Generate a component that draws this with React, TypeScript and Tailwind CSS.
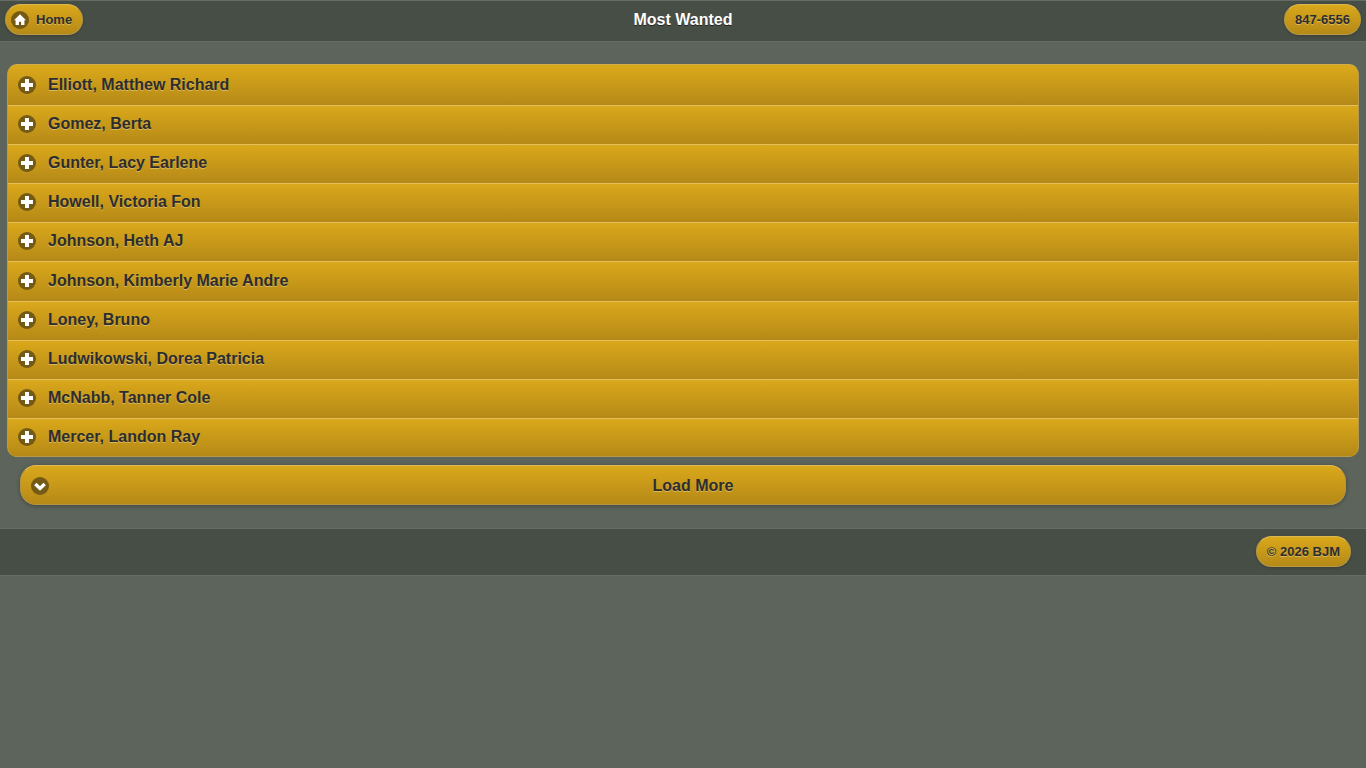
import type { ReactNode } from "react";

const people = [
    "Elliott, Matthew Richard",
    "Gomez, Berta",
    "Gunter, Lacy Earlene",
    "Howell, Victoria Fon",
    "Johnson, Heth AJ",
    "Johnson, Kimberly Marie Andre",
    "Loney, Bruno",
    "Ludwikowski, Dorea Patricia",
    "McNabb, Tanner Cole",
    "Mercer, Landon Ray",
];

const gold = "bg-linear-to-b from-[#daa81b] to-[#b58917] text-[#2d2d30] [text-shadow:0_1px_0_#d9b95c]";
const pill = "flex h-[31px] items-center rounded-full border border-[#b89a45] border-t-[#dcb850] text-[13px] leading-4 font-bold shadow-[0_1px_3px_rgba(0,0,0,0.2)]";

const IconDisc = ({ children }: { children: ReactNode }) => (
    <svg viewBox="0 0 18 18" className="h-[18px] w-[18px] shrink-0" aria-hidden="true">
        <circle cx="9" cy="9" r="9" fill="#745a14" />
        {children}
    </svg>
);

const PlusIcon = () => (
    <IconDisc>
        <path d="M7 3h4v4h4v4h-4v4H7v-4H3V7h4z" fill="#fff" />
    </IconDisc>
);

const HomeIcon = () => (
    <IconDisc>
        <path d="M9 3.2 3 9.3h1.6V14h3.3v-3.2h2.2V14h3.3V9.3H15L9 3.2Z" fill="#fff" />
    </IconDisc>
);

const ArrowDownIcon = () => (
    <IconDisc>
        <path d="m4.3 7 4.7 4.4L13.7 7" fill="none" stroke="#fff" strokeWidth="3.4" />
    </IconDisc>
);

const App = () => {
    return (
        <div className="min-h-screen bg-[#5c645b] font-['Liberation_Sans',sans-serif] text-base">
            <header className="grid h-[42px] grid-cols-[1fr_auto_1fr] items-start border-y border-[#656c64] bg-[#474e46] px-[5px] pt-[3px]">
                <a href="#home" className={`${pill} ${gold} justify-self-start gap-[7px] pr-[10px] pl-[5px]`}>
                    <HomeIcon />
                    Home
                </a>
                <h1 className="leading-[31px] font-bold text-white [text-shadow:0_1px_0_#222]">Most Wanted</h1>
                <a href="tel:847-6556" className={`${pill} ${gold} justify-self-end px-[10px]`}>847-6556</a>
            </header>

            <main className="px-[7px] pt-[22px] pb-[23px]">
                <ul className="flex min-h-[393px] flex-col overflow-hidden rounded-[10px] border-x border-t border-[#b59a4d] border-t-[#d2ad4a] bg-[#daa81b] pt-px">
                    {people.map((name) => (
                        <li key={name} className="group flex flex-1">
                            <button
                                type="button"
                                aria-expanded="false"
                                className={`${gold} flex w-full items-center gap-3 border-t border-[#e3be5b] px-[10px] pb-[2px] text-left font-bold group-first:border-t-[#daa81b] group-last:border-b group-last:border-b-[#b59a4d] group-last:pb-px`}
                            >
                                <PlusIcon />
                                {name}
                            </button>
                        </li>
                    ))}
                </ul>

                <button
                    type="button"
                    className={`${gold} mx-[13px] mt-2 grid h-10 w-[calc(100%-26px)] grid-cols-[20px_1fr] items-center rounded-[16px] border border-[#b59442] border-t-[#e0bb55] px-[10px] pt-[2px] font-bold shadow-[0_1px_4px_rgba(0,0,0,0.3)]`}
                >
                    <ArrowDownIcon />
                    Load More
                </button>
            </main>

            <footer className="flex h-12 items-start justify-end border-y border-[#656c64] bg-[#474e46] px-[15px] pt-[7px]">
                <a href="#copyright" className={`${pill} ${gold} px-[10px]`}>© 2026 BJM</a>
            </footer>
        </div>
    );
};

export default App;
